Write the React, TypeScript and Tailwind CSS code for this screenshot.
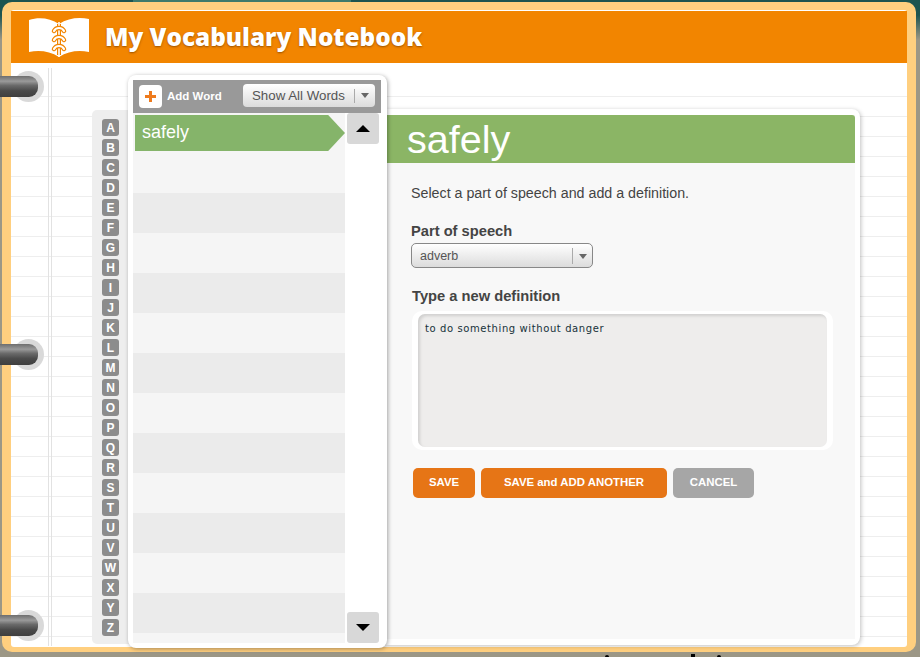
import React from 'react';

const letters = 'ABCDEFGHIJKLMNOPQRSTUVWXYZ'.split('');
const rows = [0, 1, 2, 3, 4, 5, 6, 7, 8, 9, 10, 11, 12];

const Ring: React.FC<{ className: string }> = ({ className }) => (
  <div className={`absolute left-0 w-[44px] h-[31px] ${className}`}>
    <div className="absolute left-[13px] top-0 w-[31px] h-[31px] rounded-full bg-[#d9d9d9]" />
    <div className="absolute left-0 top-[5px] w-[38px] h-[21px] rounded-r-[9px] bg-[linear-gradient(to_bottom,#6e6e6e_0,#9a9a9a_25%,#6a6a6a_45%,#4a4a4a_70%,#3f3f3f_100%)]" />
  </div>
);

const BookLogo = () => (
  <svg width="60" height="40" viewBox="0 0 60 40" className="shrink-0">
    <path d="M0 3 C10 0 21 1 30 7 C39 1 50 0 60 2 L60 35 C50 33 39 34 30 40 C21 34 10 33 0 35 Z" fill="#fff" />
    <path d="M30 7 L30 38" stroke="#f28500" strokeWidth="4" />
    <path d="M30 5 L30 40" stroke="#fff" strokeWidth="1.6" />
    <g fill="none" strokeLinecap="round">
      <path d="M25 14 C27 10 33 10 35 14 M25 23 C27 19 33 19 35 23 M25 32 C27 28 33 28 35 32" stroke="#f28500" strokeWidth="4.5" />
      <path d="M25 14 C27 10 33 10 35 14 M25 23 C27 19 33 19 35 23 M25 32 C27 28 33 28 35 32" stroke="#fff" strokeWidth="2.2" />
    </g>
  </svg>
);

const App: React.FC = () => {
  return (
    <div className="w-[920px] h-[657px] overflow-hidden bg-[linear-gradient(to_bottom,#1c5450_0,#1c5450_15px,#9c9786_40px)] font-['Liberation_Sans',Arial,sans-serif] relative">
      <div className="mt-[2px] ml-[2px] w-[914px] h-[650px] rounded-[10px] bg-[#ffcf7f] pt-[8px] pl-[9px]">
        <div className="w-[896px] h-[637px] bg-white rounded-[3px] flex flex-col">
          <div className="h-[52px] mt-[1px] bg-[#f28500] flex items-center pl-[18px] shrink-0">
            <BookLogo />
            <span className="ml-[16px] text-white text-[24.3px] font-extrabold font-['Open_Sans',sans-serif] [text-shadow:0_1px_2px_rgba(120,60,0,0.7)]">My Vocabulary Notebook</span>
          </div>
          <div className="flex-1 flex pl-[81px] relative bg-[linear-gradient(to_bottom,#fff_33px,transparent_33px),repeating-linear-gradient(to_bottom,transparent_0,transparent_13px,#eeeeee_13px,#eeeeee_14px,transparent_14px,transparent_20px)]">
            <div className="absolute left-[37px] top-[5px] bottom-[2px] w-[4px] border-x border-[#e2e2e2]" />
            {/* alphabet */}
            <div className="mt-[47px] h-[534px] w-[46px] bg-[#eeeeee] rounded-l-[5px] pl-[10px] pt-[9px] flex flex-col gap-[3px] shrink-0">
              {letters.map((l) => (
                <div key={l} className="w-[17px] h-[17px] rounded-[3px] bg-[#8c8c8c] text-white text-[12px] font-bold flex items-center justify-center">{l}</div>
              ))}
            </div>
            {/* word list */}
            <div className="-ml-[10px] mt-[12px] h-[573px] w-[259px] bg-white rounded-[8px] shadow-[1px_1px_4px_rgba(0,0,0,0.35)] p-[5px] relative z-10 shrink-0">
              <div className="h-[33px] w-[248px] bg-[#999999] flex items-center pl-[6px]">
                <div className="w-[23px] h-[23px] bg-white rounded-[4px] flex items-center justify-center">
                  <svg width="11" height="11" viewBox="0 0 11 11">
                    <path d="M4 0h3v4h4v3H7v4H4V7H0V4h4z" fill="#ee7b1e" />
                  </svg>
                </div>
                <span className="ml-[5px] w-[56px] text-white text-[11.5px] font-bold">Add Word</span>
                <div className="ml-[20px] w-[132px] h-[23px] rounded-[4px] bg-gradient-to-b from-white to-[#dcdcdc] flex items-center text-[#555555] text-[13.3px] pl-[9px] -mt-[3px] -mb-[1px]">
                  <span className="flex-1">Show All Words</span>
                  <span className="w-[21px] h-[14px] border-l border-[#aaaaaa] flex items-center justify-center">
                    <span className="w-0 h-0 border-x-[4px] border-x-transparent border-t-[5px] border-t-[#666666]" />
                  </span>
                </div>
              </div>
              <div className="flex">
                <div className="w-[212px] h-[530px] overflow-hidden bg-[#f5f5f5] relative">
                  {rows.map((r) => (
                    <div key={r} className={r % 2 === 0 && r > 0 ? 'h-[40px] bg-[#ebebeb]' : 'h-[40px] bg-[#f5f5f5]'} />
                  ))}
                  <div className="absolute left-[2px] top-[2px] w-[210px] h-[36px] bg-[#85b46a] text-white text-[18px] flex items-center pl-[7px] pb-[1px] [clip-path:polygon(0_0,92%_0,100%_50%,92%_100%,0_100%)]">safely</div>
                </div>
                <div className="w-[34px] pl-[2px] flex flex-col justify-between h-[530px]">
                  <div className="w-[32px] h-[31px] bg-[#d8d8d8] rounded-[3px] flex items-center justify-center">
                    <div className="w-0 h-0 border-x-[7px] border-x-transparent border-b-[7px] border-b-black" />
                  </div>
                  <div className="w-[32px] h-[31px] bg-[#d8d8d8] rounded-[3px] flex items-center justify-center">
                    <div className="w-0 h-0 border-x-[7px] border-x-transparent border-t-[7px] border-t-black" />
                  </div>
                </div>
              </div>
            </div>
            {/* detail */}
            <div className="-ml-[1px] mt-[46px] h-[536px] w-[474px] bg-white rounded-r-[8px] shadow-[1px_1px_4px_rgba(0,0,0,0.25)] py-[6px] pr-[5px] shrink-0">
              <div className="h-full bg-[#f8f8f8] flex flex-col">
                <div className="h-[48px] bg-[#8bb565] text-white text-[39.6px] leading-[48px] pl-[21px] rounded-tr-[3px]">safely</div>
                <div className="pl-[25px] pt-[22px] flex flex-col">
                  <p className="text-[14.25px] leading-[16px] text-[#444444]">Select a part of speech and add a definition.</p>
                  <p className="mt-[22px] text-[14.7px] leading-[16px] font-bold text-[#444444]">Part of speech</p>
                  <div className="mt-[4px] w-[182px] h-[25px] rounded-[5px] border border-[#888888] bg-gradient-to-b from-white to-[#dcdcdc] flex items-center pl-[8px] pt-[1px] text-[12.5px] text-[#555555]">
                    <span className="flex-1">adverb</span>
                    <span className="w-[20px] h-[16px] border-l border-[#aaaaaa] flex items-center justify-center">
                      <span className="w-0 h-0 border-x-[4px] border-x-transparent border-t-[5px] border-t-[#666666]" />
                    </span>
                  </div>
                  <p className="mt-[20px] ml-[1px] text-[14.7px] leading-[16px] font-bold text-[#444444]">Type a new definition</p>
                  <div className="mt-[7px] ml-[1px] w-[421px] h-[139px] rounded-[10px] bg-white py-[3px] px-[6px]">
                    <div className="h-full rounded-[7px] bg-[#eeedec] shadow-[inset_2px_2px_3px_rgba(0,0,0,0.12)] px-[7px] py-[7px] text-[10px] tracking-[0.6px] text-[#17323a] font-['DejaVu_Sans',sans-serif]">to do something without danger</div>
                  </div>
                  <div className="mt-[18px] ml-[2px] flex gap-[6px]">
                    <button className="w-[62px] h-[30px] rounded-[5px] bg-[#e67516] text-white text-[11.4px] font-bold">SAVE</button>
                    <button className="w-[186px] h-[30px] rounded-[5px] bg-[#e67516] text-white text-[11.4px] font-bold">SAVE and ADD ANOTHER</button>
                    <button className="w-[81px] h-[30px] rounded-[5px] bg-[#a6a6a6] text-white text-[11.4px] font-bold">CANCEL</button>
                  </div>
                </div>
              </div>
            </div>
          </div>
        </div>
      </div>
      <Ring className="top-[71px]" />
      <Ring className="top-[339px]" />
      <Ring className="top-[610px]" />
      {/* bits of the desktop picture showing round the notebook */}
      <div className="absolute left-[133px] top-0 w-[218px] h-[2px] bg-[#3d7a6c]" />
      <div className="absolute left-[605px] bottom-0 w-[4px] h-[2px] rounded-t-full bg-black" />
      <div className="absolute left-[691px] bottom-0 w-[4px] h-[3px] bg-black" />
      <div className="absolute left-[717px] bottom-0 w-[4px] h-[2px] rounded-t-full bg-black" />
    </div>
  );
};

export default App;
